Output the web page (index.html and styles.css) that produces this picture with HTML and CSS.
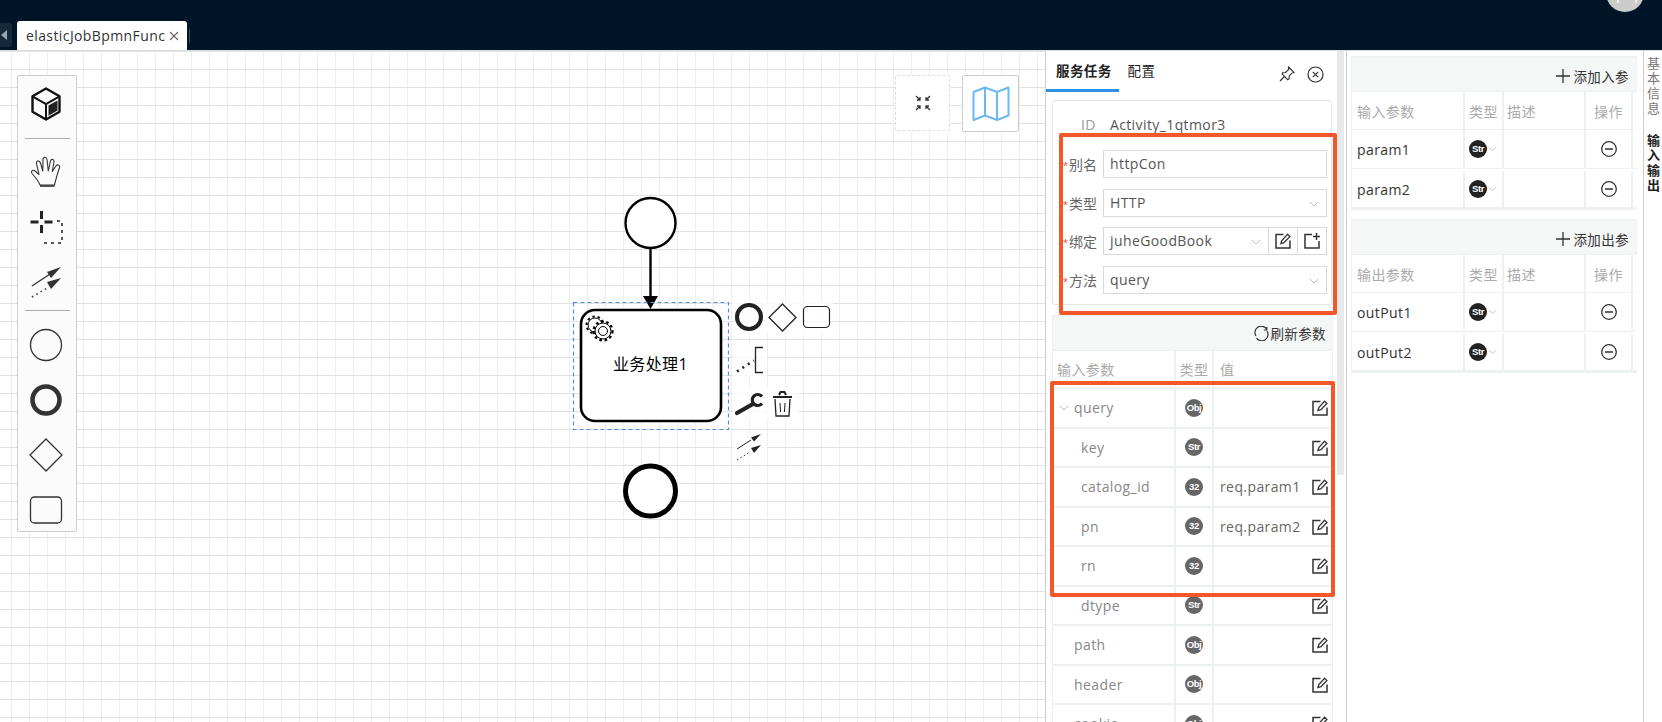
FILE: index.html
```html
<!DOCTYPE html>
<html lang="zh-CN">
<head>
  <meta charset="UTF-8">
  <title>elasticJobBpmnFunc</title>
  <link rel="stylesheet" href="styles.css">
</head>
<body>
  <!-- shared icons -->
  <svg class="defs" width="0" height="0" aria-hidden="true">
    <symbol id="i-edit" viewBox="0 0 18 18">
      <path d="M9.500 2.500H2v13.500h14V8.500" fill="none" stroke="#333" stroke-width="1.500"/>
      <path d="M7 11.500l.8-3L13.600 2.200l2.300 2.200-5.900 6.200z" fill="none" stroke="#333" stroke-width="1.300"/>
    </symbol>
    <symbol id="i-new" viewBox="0 0 18 18">
      <path d="M9 2.500H2v13.500h14V9" fill="none" stroke="#333" stroke-width="1.500"/>
      <path d="M13.500 1v7M10 4.500h7" fill="none" stroke="#333" stroke-width="1.500"/>
    </symbol>
    <symbol id="i-chev" viewBox="0 0 10 6">
      <path d="M1 1l4 4 4-4" fill="none" stroke="#bbb" stroke-width="1"/>
    </symbol>
    <symbol id="i-minus" viewBox="0 0 16 16">
      <circle cx="8" cy="8" r="7.300" fill="none" stroke="#333" stroke-width="1.300"/>
      <path d="M4 8h8" stroke="#333" stroke-width="1.500"/>
    </symbol>
    <symbol id="i-plus" viewBox="0 0 14 14">
      <path d="M7 0v14M0 7h14" stroke="#333" stroke-width="1.300"/>
    </symbol>
  </svg>

  <header class="topbar">
    <div class="avatar"></div>
  </header>

  <nav class="tabstrip">
    <span class="tab-prev"></span>
    <div class="tab">
      <span>elasticJobBpmnFunc</span>
      <svg class="tab-close" width="10" height="10" viewBox="0 0 10 10"><path d="M1 1l8 8M9 1l-8 8" stroke="#666" stroke-width="1.100"/></svg>
    </div>
    <span class="tab-sep"></span>
  </nav>

  <main class="workspace">
    <!-- bpmn canvas -->
    <section class="canvas">
      <div class="palette">
        <svg class="tool" viewBox="0 0 36 36">
          <path d="M18 2.500l13.500 7.800v15.400L18 33.500 4.500 25.700V10.300z" fill="none" stroke="#111" stroke-width="2.400" stroke-linejoin="round"/>
          <path d="M4.500 10.300L18 18l13.500-7.700M18 18v15.500" fill="none" stroke="#111" stroke-width="2"/>
          <path d="M20.500 19.500l9-5v10l-9 5.200z" fill="#222"/>
        </svg>
        <hr class="palette-sep sep-top">
        <svg class="tool tool-hand" viewBox="0 0 36 36">
          <path d="M12 31C10.500 27 8 24 4 19.500c-1.500-2 .5-4 2.500-3L11 20.500 8.500 9.500c-.5-3 3-3.500 4-.5l2.300 8L15 5.500c0-3 3.500-3 4 0l1.300 11.500L22.500 7c.7-2.500 4-2 3.500 1l-1.800 9.500 3.800-5.500c1.800-2.300 4.500-.5 3.500 1.800C29.500 19 28 25 26.500 31z" fill="none" stroke="#333" stroke-width="1.100" stroke-linejoin="round"/>
          <path d="M12 32h14.500" stroke="#333" stroke-width="1.600"/>
        </svg>
        <svg class="tool tool-mid" viewBox="0 0 36 36">
          <path d="M13.500 2v8M13.500 16v8M2.500 13h8M16.500 13h8" stroke="#222" stroke-width="3"/>
          <path d="M29 12h5v22H13" fill="none" stroke="#222" stroke-width="1.500" stroke-dasharray="3 4"/>
        </svg>
        <svg class="tool tool-mid" viewBox="0 0 36 36">
          <path d="M4 22l18-12" stroke="#333" stroke-width="1.300"/>
          <path d="M33 3L19 8l4 6z" fill="#333"/>
          <path d="M4 33l17-10" stroke="#333" stroke-width="1.500" stroke-dasharray="1.500 3.500"/>
          <path d="M33 14l-14 4 4 7z" fill="#333"/>
        </svg>
        <hr class="palette-sep sep-bottom">
        <svg class="tool tool-shape" viewBox="0 0 36 36"><circle cx="18" cy="18" r="15.500" fill="none" stroke="#333" stroke-width="1.300"/></svg>
        <svg class="tool tool-mid" viewBox="0 0 36 36"><circle cx="18" cy="18" r="13.500" fill="none" stroke="#333" stroke-width="4.600"/></svg>
        <svg class="tool tool-mid" viewBox="0 0 36 36"><path d="M18 2l16 16-16 16L2 18z" fill="none" stroke="#333" stroke-width="1.300"/></svg>
        <svg class="tool tool-mid" viewBox="0 0 36 36"><rect x="2.500" y="5" width="31" height="26" rx="4" fill="none" stroke="#333" stroke-width="1.300"/></svg>
      </div>

      <div class="zoom-btn">
        <svg width="16" height="16" viewBox="0 0 16 16"><path d="M1 1l4 4M5 2v3H2M15 1l-4 4M11 2v3h3M1 15l4-4M2 11h3v3M15 15l-4-4M14 11h-3v3" fill="none" stroke="#333" stroke-width="1.300"/></svg>
      </div>
      <div class="map-btn">
        <svg width="38" height="35" viewBox="0 0 38 35"><path d="M1.500 6L13 1.500l12 4.500 11.500-4.500v28L25 34 13 29.500 1.500 34zM13 1.500v28M25 6v28" fill="none" stroke="#6cb9f2" stroke-width="2" stroke-linejoin="round"/></svg>
      </div>

      <!-- diagram sits on a free canvas, same coords as the window minus the top 50px -->
      <svg class="diagram" width="1045" height="672" viewBox="0 50 1045 672">
        <circle cx="650.500" cy="223" r="25" fill="#fff" stroke="#000" stroke-width="2.400"/>
        <path d="M650.500 248v50" stroke="#000" stroke-width="2.400"/>
        <path d="M643 296h15l-7.500 13z" fill="#000"/>
        <rect x="573.500" y="302.500" width="155" height="127" fill="none" stroke="#4f8fd8" stroke-width="1.200" stroke-dasharray="4 3"/>
        <rect x="581" y="310" width="140" height="111" rx="14" fill="#fff" stroke="#000" stroke-width="2.600"/>
        <circle cx="595" cy="325" r="7" fill="#fff" stroke="#000"/>
        <circle cx="595" cy="325" r="8.500" fill="none" stroke="#000" stroke-width="2" stroke-dasharray="2.500 2.800"/>
        <circle cx="603" cy="331" r="8" fill="#fff" stroke="#000"/>
        <circle cx="603" cy="331" r="9.500" fill="none" stroke="#000" stroke-width="2.200" stroke-dasharray="2.600 2.700"/>
        <circle cx="603" cy="331" r="4.500" fill="#fff" stroke="#000"/>
        <text class="task-label" x="650.500" y="370" text-anchor="middle">业务处理1</text>
        <circle cx="650.500" cy="491" r="25" fill="#fff" stroke="#000" stroke-width="5"/>

        <!-- context pad -->
        <rect class="pad" x="733" y="301" width="100" height="32"/>
        <rect class="pad" x="733" y="344" width="34" height="32"/>
        <rect class="pad" x="733" y="387" width="66" height="33"/>
        <rect class="pad" x="733" y="430" width="34" height="33"/>
        <circle cx="749" cy="317" r="12" fill="none" stroke="#222" stroke-width="4"/>
        <path d="M782.500 304l13.500 13.500-13.500 13.500-13.500-13.500z" fill="none" stroke="#222" stroke-width="1.300"/>
        <rect x="803.500" y="306.500" width="26" height="21" rx="4" fill="none" stroke="#222" stroke-width="1.200"/>
        <path d="M737 371.500l17-11" stroke="#222" stroke-width="2.600" stroke-dasharray="2 4.500"/>
        <path d="M763 347.500h-7.500v25h7.500" fill="none" stroke="#222" stroke-width="1.300"/>
        <path d="M737 413l16-9" stroke="#222" stroke-width="4.200" stroke-linecap="round"/>
        <path d="M762 396.500a5.500 5.500 0 1 0 0 7" fill="none" stroke="#222" stroke-width="3.200"/>
        <path d="M773 397h19M779 395l1.500-3h4l1.500 3" fill="none" stroke="#222" stroke-width="2"/>
        <path d="M775 399l1 17h13l1-17" fill="none" stroke="#222" stroke-width="1.300"/>
        <path d="M780 403l.6 9M785 403l-.6 9" stroke="#222" stroke-width="1"/>
        <path d="M737 449l14-9" stroke="#222"/>
        <path d="M761 434l-10 3.500 3 4z" fill="#222"/>
        <path d="M737 460l13-8" stroke="#222" stroke-dasharray="1.500 2.500"/>
        <path d="M761 445l-10 3 3 5z" fill="#222"/>
      </svg>
    </section>

    <!-- task properties -->
    <aside class="props">
      <div class="props-tabs">
        <span class="props-tab is-active">服务任务</span>
        <span class="props-tab">配置</span>
        <div class="props-actions">
          <svg width="16" height="16" viewBox="0 0 16 16"><path d="M9.500 1l5.500 5.500-1.800.4-3 3-.2 3-1.300.8L3 8l.6-1.200 3-.3 3-3zM5.500 10.500L1 15" fill="none" stroke="#333" stroke-width="1.100"/></svg>
          <svg width="17" height="17" viewBox="0 0 17 17"><circle cx="8.500" cy="8.500" r="7.500" fill="none" stroke="#333" stroke-width="1.200"/><path d="M5.800 5.800l5.400 5.400M11.200 5.800l-5.400 5.400" stroke="#333" stroke-width="1.200"/></svg>
        </div>
      </div>

      <div class="form-card">
        <div class="id-row"><span class="id-key">ID</span><span class="id-val">Activity_1qtmor3</span></div>
        <div class="form-row">
          <label class="form-label">别名</label>
          <div class="field">httpCon</div>
        </div>
        <div class="form-row">
          <label class="form-label">类型</label>
          <div class="field">HTTP<svg class="chev"><use href="#i-chev"/></svg></div>
        </div>
        <div class="form-row">
          <label class="form-label">绑定</label>
          <div class="field-group">
            <div class="field">juheGoodBook<svg class="chev"><use href="#i-chev"/></svg></div>
            <span class="field-btn"><svg width="18" height="18"><use href="#i-edit"/></svg></span>
            <span class="field-btn"><svg width="18" height="18"><use href="#i-new"/></svg></span>
          </div>
        </div>
        <div class="form-row">
          <label class="form-label">方法</label>
          <div class="field">query<svg class="chev"><use href="#i-chev"/></svg></div>
        </div>
      </div>

      <div class="ptable">
        <div class="ptable-bar">
          <svg width="15" height="15" viewBox="0 0 15 15"><path d="M2 10A6 6 0 0 1 12.500 3M13 5a6 6 0 0 1-10.500 7M12.800 1v3h-3" fill="none" stroke="#333" stroke-width="1.200"/></svg>
          <span>刷新参数</span>
        </div>
        <div class="prow prow-head"><span class="c-name">输入参数</span><span class="c-type">类型</span><span class="c-val">值</span></div>
        <div class="prow">
          <span class="c-name lvl-0"><svg class="tree-chev"><use href="#i-chev"/></svg>query</span>
          <span class="c-type"><b class="badge">Obj</b></span>
          <span class="c-val"><svg class="edit"><use href="#i-edit"/></svg></span>
        </div>
        <div class="prow">
          <span class="c-name lvl-1">key</span>
          <span class="c-type"><b class="badge">Str</b></span>
          <span class="c-val"><svg class="edit"><use href="#i-edit"/></svg></span>
        </div>
        <div class="prow">
          <span class="c-name lvl-1">catalog_id</span>
          <span class="c-type"><b class="badge">32</b></span>
          <span class="c-val">req.param1<svg class="edit"><use href="#i-edit"/></svg></span>
        </div>
        <div class="prow">
          <span class="c-name lvl-1">pn</span>
          <span class="c-type"><b class="badge">32</b></span>
          <span class="c-val">req.param2<svg class="edit"><use href="#i-edit"/></svg></span>
        </div>
        <div class="prow">
          <span class="c-name lvl-1">rn</span>
          <span class="c-type"><b class="badge">32</b></span>
          <span class="c-val"><svg class="edit"><use href="#i-edit"/></svg></span>
        </div>
        <div class="prow">
          <span class="c-name lvl-1">dtype</span>
          <span class="c-type"><b class="badge">Str</b></span>
          <span class="c-val"><svg class="edit"><use href="#i-edit"/></svg></span>
        </div>
        <div class="prow">
          <span class="c-name lvl-0">path</span>
          <span class="c-type"><b class="badge">Obj</b></span>
          <span class="c-val"><svg class="edit"><use href="#i-edit"/></svg></span>
        </div>
        <div class="prow">
          <span class="c-name lvl-0">header</span>
          <span class="c-type"><b class="badge">Obj</b></span>
          <span class="c-val"><svg class="edit"><use href="#i-edit"/></svg></span>
        </div>
        <div class="prow">
          <span class="c-name lvl-0">cookie</span>
          <span class="c-type"><b class="badge">Obj</b></span>
          <span class="c-val"><svg class="edit"><use href="#i-edit"/></svg></span>
        </div>
      </div>

      <div class="scrollthumb"></div>
      <!-- red marks drawn on top of the screenshot -->
      <div class="mark mark-form"></div>
      <div class="mark mark-table"></div>
    </aside>

    <!-- input / output -->
    <aside class="io">
      <div class="iotable">
        <div class="iotable-bar"><svg width="14" height="14"><use href="#i-plus"/></svg><span>添加入参</span></div>
        <div class="iorow iorow-head"><span class="io-name">输入参数</span><span class="io-type">类型</span><span class="io-desc">描述</span><span class="io-op">操作</span></div>
        <div class="iorow">
          <span class="io-name">param1</span>
          <span class="io-type"><b class="badge badge-dark">Str</b><svg class="io-chev"><use href="#i-chev"/></svg></span>
          <span class="io-desc"></span>
          <span class="io-op"><svg width="16" height="16"><use href="#i-minus"/></svg></span>
        </div>
        <div class="iorow iorow-last">
          <span class="io-name">param2</span>
          <span class="io-type"><b class="badge badge-dark">Str</b><svg class="io-chev"><use href="#i-chev"/></svg></span>
          <span class="io-desc"></span>
          <span class="io-op"><svg width="16" height="16"><use href="#i-minus"/></svg></span>
        </div>
      </div>
      <div class="iotable">
        <div class="iotable-bar"><svg width="14" height="14"><use href="#i-plus"/></svg><span>添加出参</span></div>
        <div class="iorow iorow-head"><span class="io-name">输出参数</span><span class="io-type">类型</span><span class="io-desc">描述</span><span class="io-op">操作</span></div>
        <div class="iorow">
          <span class="io-name">outPut1</span>
          <span class="io-type"><b class="badge badge-dark">Str</b><svg class="io-chev"><use href="#i-chev"/></svg></span>
          <span class="io-desc"></span>
          <span class="io-op"><svg width="16" height="16"><use href="#i-minus"/></svg></span>
        </div>
        <div class="iorow iorow-last">
          <span class="io-name">outPut2</span>
          <span class="io-type"><b class="badge badge-dark">Str</b><svg class="io-chev"><use href="#i-chev"/></svg></span>
          <span class="io-desc"></span>
          <span class="io-op"><svg width="16" height="16"><use href="#i-minus"/></svg></span>
        </div>
      </div>
    </aside>

    <div class="vtabs">
      <span class="vtab">基本信息</span>
      <span class="vtab is-active">输入输出</span>
    </div>
  </main>
</body>
</html>
```

FILE: styles.css
```css
* {
  box-sizing: border-box;
}

html, body {
  height: 100%;
}

body {
  margin: 0;
  width: 1662px;
  height: 722px;
  overflow: hidden;
  display: flex;
  flex-direction: column;
  font-family: "Open Sans", "Noto Sans CJK SC", sans-serif;
  font-size: 14px;
  letter-spacing: 0.4px;
  color: #333;
  background: #fff;
}

.defs {
  position: absolute;
}

/* Top bar */
.topbar {
  height: 21px;
  flex: none;
  background: #001528;
  display: flex;
  justify-content: flex-end;
}

.avatar {
  width: 38px;
  height: 38px;
  margin: -26px 18px 0 0;
  border-radius: 50%;
  background: #ccc;
  position: relative;
}

/* bottom of the person glyph, the rest is off screen */
.avatar::before {
  content: "";
  position: absolute;
  left: 11px;
  top: 26px;
  width: 16px;
  height: 3px;
  border-left: 2px solid #eee;
  border-right: 2px solid #eee;
}

.tabstrip {
  height: 29px;
  flex: none;
  display: flex;
  background: #001528;
}

.tab-prev {
  width: 12px;
  height: 24px;
  margin: 2px 5px 0 0;
  background: #15293c;
  border-radius: 0 3px 3px 0;
  position: relative;
}

.tab-prev::after {
  content: "";
  position: absolute;
  left: 1px;
  top: 7px;
  border: 5px solid transparent;
  border-left: 0;
  border-right: 6px solid #9aa5af;
}

.tab {
  width: 170px;
  display: flex;
  align-items: center;
  gap: 4px;
  padding-left: 9px;
  background: #fff;
  border-radius: 3px 3px 0 0;
  white-space: nowrap;
}

.tab-close {
  flex: none;
}

.tab-sep {
  width: 1px;
  height: 14px;
  margin: 8px 0 0 2px;
  background: #3b4b5a;
}

/* Main area */
.workspace {
  flex: 1;
  display: flex;
  min-height: 0;
  border-top: 1px solid #ddd;
}

.canvas {
  width: 1045px;
  flex: none;
  position: relative;
  overflow: hidden;
  background-color: #fff;
  background-image:
    linear-gradient(#e2e2e2 1px, transparent 1px),
    linear-gradient(90deg, #eeeeee 1px, transparent 1px);
  background-size: 18px 18px;
  background-position: 0 0, 11px 0;
}

.palette {
  position: absolute;
  left: 17px;
  top: 24px;
  width: 60px;
  height: 457px;
  padding-top: 10px;
  display: flex;
  flex-direction: column;
  align-items: center;
  background: #fbfbfb;
  border: 1px solid #ccc;
  border-radius: 2px;
}

.tool {
  width: 36px;
  height: 36px;
  flex: none;
  margin-left: -3px;
}

.tool-mid {
  margin-top: 19px;
}

.tool-hand {
  margin-top: 15px;
}

.tool-shape {
  margin-top: 16px;
}

.palette-sep {
  width: 45px;
  height: 1px;
  margin: 0;
  border: 0;
  flex: none;
  background: #aaa;
}

.sep-top {
  margin-top: 16px;
}

.sep-bottom {
  margin-top: 10px;
}

.zoom-btn {
  position: absolute;
  left: 895px;
  top: 24px;
  width: 55px;
  height: 56px;
  display: flex;
  align-items: center;
  justify-content: center;
  background: #fff;
  border: 1px dashed #ddd;
  border-radius: 2px;
}

.map-btn {
  position: absolute;
  left: 962px;
  top: 24px;
  width: 57px;
  height: 57px;
  display: flex;
  align-items: center;
  justify-content: center;
  background: #fff;
  border: 1px solid #ccc;
  border-radius: 2px;
}

.diagram {
  position: absolute;
  left: 0;
  top: -1px;
}

.task-label {
  font-size: 16px;
  fill: #000;
}

.pad {
  fill: #fff;
  fill-opacity: 0.75;
}

/* Properties panel */
.props {
  width: 301px;
  flex: none;
  position: relative;
  overflow: hidden;
  padding: 0 13px 0 6px;
  border-left: 1px solid #ccc;
  background: #fff;
}

.props-tabs {
  height: 41px;
  margin-left: -6px;
  padding-left: 10px;
  display: flex;
  gap: 15px;
  position: relative;
}

.props-tab {
  font-size: 13.500px;
  line-height: 40px;
  color: #222;
  padding-right: 1px;
}

.props-tab.is-active {
  font-weight: 700;
  position: relative;
}

.props-tab.is-active::after {
  content: "";
  position: absolute;
  left: -10px;
  right: -6px;
  bottom: 0;
  height: 3px;
  background: #2a93e6;
}

.props-actions {
  position: absolute;
  top: 15px;
  right: 9px;
  display: flex;
  gap: 12px;
}

.form-card {
  height: 205px;
  margin-top: 8px;
  margin-right: 1px;
  padding: 12px 4px 0 0;
  border: 1px solid #e4e4e4;
  border-radius: 3px;
}

.id-row {
  height: 24px;
  line-height: 24px;
  margin-bottom: 13px;
  padding-left: 28px;
  display: flex;
  gap: 14px;
}

.id-key {
  color: #999;
}

.id-val {
  color: #555;
}

.form-row {
  height: 28px;
  margin-bottom: 10.500px;
  display: flex;
  align-items: center;
}

.form-label {
  width: 50px;
  flex: none;
  padding-left: 16px;
  font-size: 14px;
  letter-spacing: 0;
  color: #666;
  position: relative;
}

.form-label::before {
  content: "*";
  position: absolute;
  left: 10px;
  top: 5px;
  font-size: 9px;
  color: #e0443e;
}

.field {
  flex: 1;
  height: 28px;
  padding: 0 6px;
  line-height: 26px;
  color: #555;
  border: 1px solid #d9d9d9;
  position: relative;
}

.chev {
  position: absolute;
  right: 7px;
  top: 11px;
  width: 10px;
  height: 6px;
}

.field-group {
  flex: 1;
  display: flex;
}

.field-btn {
  width: 29px;
  height: 28px;
  flex: none;
  display: flex;
  align-items: center;
  justify-content: center;
  border: 1px solid #d9d9d9;
  border-left: 0;
}

/* Input parameter table */
.ptable {
  margin-top: 10px;
}

.ptable-bar {
  height: 36px;
  padding-right: 6px;
  display: flex;
  align-items: center;
  justify-content: flex-end;
  gap: 1px;
  font-size: 13.500px;
  background: #f5f6f6;
  border: 1px solid #eef1f1;
}

.prow {
  height: 39.500px;
  display: flex;
  border-left: 1px solid #eef1f1;
  border-right: 1px solid #eef1f1;
  border-bottom: 2px solid #eef1f1;
  color: #888;
}

.prow-head {
  height: 38px;
  color: #aaa;
  font-size: 14px;
}

.prow span {
  display: flex;
  align-items: center;
}

.c-name {
  width: 123px;
  flex: none;
  padding-left: 4px;
  border-right: 2px solid #eef1f1;
}

.lvl-0 {
  padding-left: 21px;
  position: relative;
}

.lvl-1 {
  padding-left: 28px;
}

.tree-chev {
  position: absolute;
  left: 6px;
  top: 16px;
  width: 10px;
  height: 6px;
}

.c-type {
  width: 38px;
  flex: none;
  justify-content: center;
  border-right: 2px solid #eef1f1;
}

.c-val {
  flex: 1;
  padding-left: 6px;
  color: #666;
  position: relative;
}

.prow-head .c-val {
  color: #aaa;
}

.edit {
  position: absolute;
  right: 3px;
  top: 10px;
  width: 18px;
  height: 18px;
}

.badge {
  width: 18px;
  height: 18px;
  flex: none;
  border-radius: 50%;
  background: #666;
  color: #fff;
  font-size: 9.500px;
  line-height: 18px;
  text-align: center;
  white-space: nowrap;
  font-family: "Liberation Sans", sans-serif;
  letter-spacing: -0.4px;
}

.badge-dark {
  background: #222;
}

.scrollthumb {
  position: absolute;
  left: 291px;
  top: 0;
  width: 7px;
  height: 424px;
  background: #e8e8e8;
}

.mark {
  position: absolute;
  border: 4px solid #f4572a;
  border-radius: 2px;
}

.mark-form {
  left: 13px;
  top: 82px;
  width: 278px;
  height: 182px;
}

.mark-table {
  left: 4px;
  top: 330px;
  width: 285px;
  height: 216px;
}

/* Input / output panel */
.io {
  width: 298px;
  flex: none;
  padding: 5px 6px 0 4px;
  border-left: 1px solid #ccc;
  border-right: 1px solid #ccc;
  background: #fff;
}

.iotable {
  margin-bottom: 9px;
  border-bottom: 2px solid #eef1f1;
}

.iotable-bar {
  height: 36px;
  padding: 3px 7px 0 0;
  display: flex;
  align-items: center;
  justify-content: flex-end;
  gap: 3px;
  font-size: 13.500px;
  background: #f5f6f6;
  border: 1px solid #eef1f1;
}

.iorow {
  height: 39px;
  display: flex;
  border-left: 1px solid #eef1f1;
  border-bottom: 1px solid #eef1f1;
}

.iorow-last {
  padding-top: 2px;
}

.iorow span {
  display: flex;
  align-items: center;
}

.iorow-head {
  height: 38px;
  color: #aaa;
}

.io-name {
  width: 113px;
  flex: none;
  padding-left: 5px;
  border-right: 2px solid #eef1f1;
}

.io-type {
  width: 39px;
  flex: none;
  padding-left: 4px;
  gap: 1px;
  border-right: 2px solid #eef1f1;
}

.io-desc {
  width: 82px;
  flex: none;
  padding-left: 3px;
  border-right: 2px solid #eef1f1;
}

.io-op {
  width: 47px;
  flex: none;
  justify-content: center;
  border-right: 2px solid #eef1f1;
}

.io-chev {
  width: 9px;
  height: 6px;
}

/* Vertical tabs */
.vtabs {
  width: 18px;
  flex: none;
  padding-top: 6px;
  display: flex;
  flex-direction: column;
  align-items: center;
  gap: 18px;
}

.vtab {
  writing-mode: vertical-rl;
  text-orientation: upright;
  font-size: 13px;
  line-height: 18px;
  letter-spacing: 1.800px;
  color: #777;
}

.vtab.is-active {
  font-weight: 700;
  color: #222;
}
```
